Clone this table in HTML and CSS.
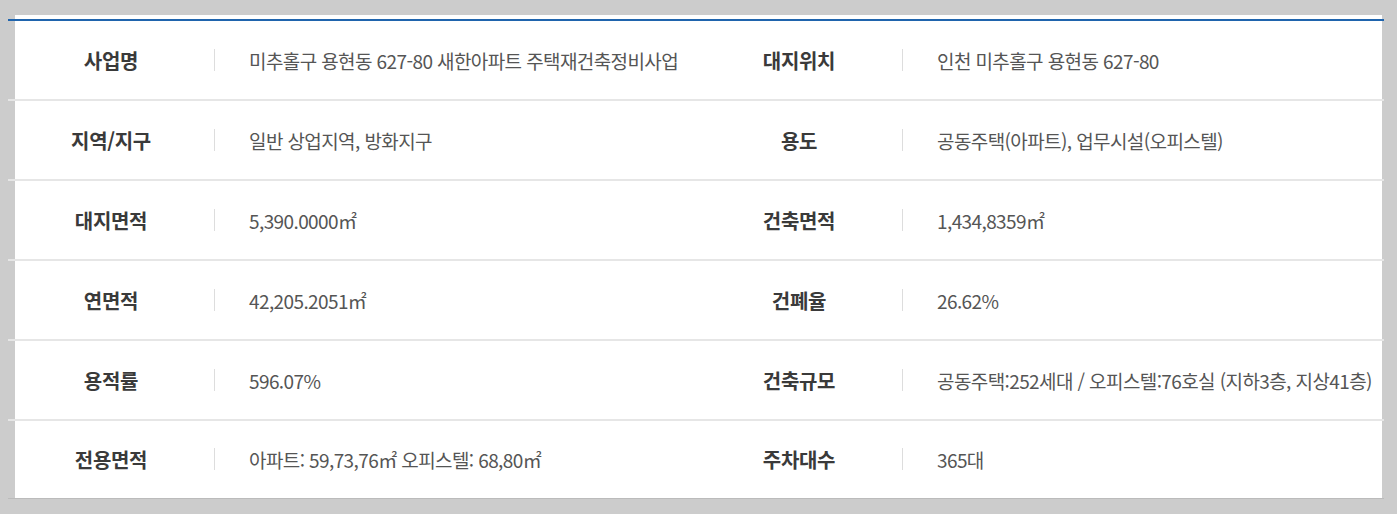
FILE: index.html
```html
<!DOCTYPE html>
<html lang="ko">
<head>
    <meta charset="UTF-8">
    <meta name="viewport" content="width=device-width, initial-scale=1.0">
    <title>사업개요</title>
    <link rel="stylesheet" href="styles.css">
</head>
<body>
    <div class="panel">
        <table class="overview">
            <tr>
                <th>사업명</th>
                <td>미추홀구 용현동 627-80 새한아파트 주택재건축정비사업</td>
                <th>대지위치</th>
                <td>인천 미추홀구 용현동 627-80</td>
            </tr>
            <tr>
                <th>지역/지구</th>
                <td>일반 상업지역, 방화지구</td>
                <th>용도</th>
                <td>공동주택(아파트), 업무시설(오피스텔)</td>
            </tr>
            <tr>
                <th>대지면적</th>
                <td>5,390.0000㎡</td>
                <th>건축면적</th>
                <td>1,434,8359㎡</td>
            </tr>
            <tr>
                <th>연면적</th>
                <td>42,205.2051㎡</td>
                <th>건폐율</th>
                <td>26.62%</td>
            </tr>
            <tr>
                <th>용적률</th>
                <td>596.07%</td>
                <th>건축규모</th>
                <td>공동주택:252세대 / 오피스텔:76호실 (지하3층, 지상41층)</td>
            </tr>
            <tr>
                <th>전용면적</th>
                <td>아파트: 59,73,76㎡ 오피스텔: 68,80㎡</td>
                <th>주차대수</th>
                <td>365대</td>
            </tr>
        </table>
    </div>
</body>
</html>
```

FILE: styles.css
```css
body {
    margin: 0;
    background-color: #cccccc;
    font-family: "Noto Sans CJK KR", "Noto Sans", sans-serif;
}
.panel {
    width: 1367px;
    height: 484px;
    margin: 15px 0 0 15px;
    padding-top: 4px;
    box-sizing: border-box;
    background: #fff;
}
.overview {
    width: 1376px;
    margin-left: -7px;
    border-collapse: collapse;
    table-layout: fixed;
    border-top: 2px solid #1f64ad;
}
.overview tr {
    height: 80px;
    border-bottom: 2px solid #e6e6e6;
}
.overview tr:last-child {
    height: 79px;
    border-bottom: 3px solid #bbbbbb;
}
.overview th, .overview td {
    padding: 0;
    vertical-align: middle;
}
.overview th {
    width: 206px;
    font-size: 20px;
    font-weight: 700;
    color: #3a3a3a;
    text-align: center;
    letter-spacing: -0.3px;
}
.overview td {
    width: 447px;
    position: relative;
    padding-left: 35px;
    font-size: 19px;
    color: #555;
    letter-spacing: -0.6px;
    white-space: nowrap;
}
.overview td::before {
    content: "";
    position: absolute;
    left: 0;
    top: 50%;
    width: 1px;
    height: 22px;
    margin-top: -11px;
    background: #dddddd;
}
```
